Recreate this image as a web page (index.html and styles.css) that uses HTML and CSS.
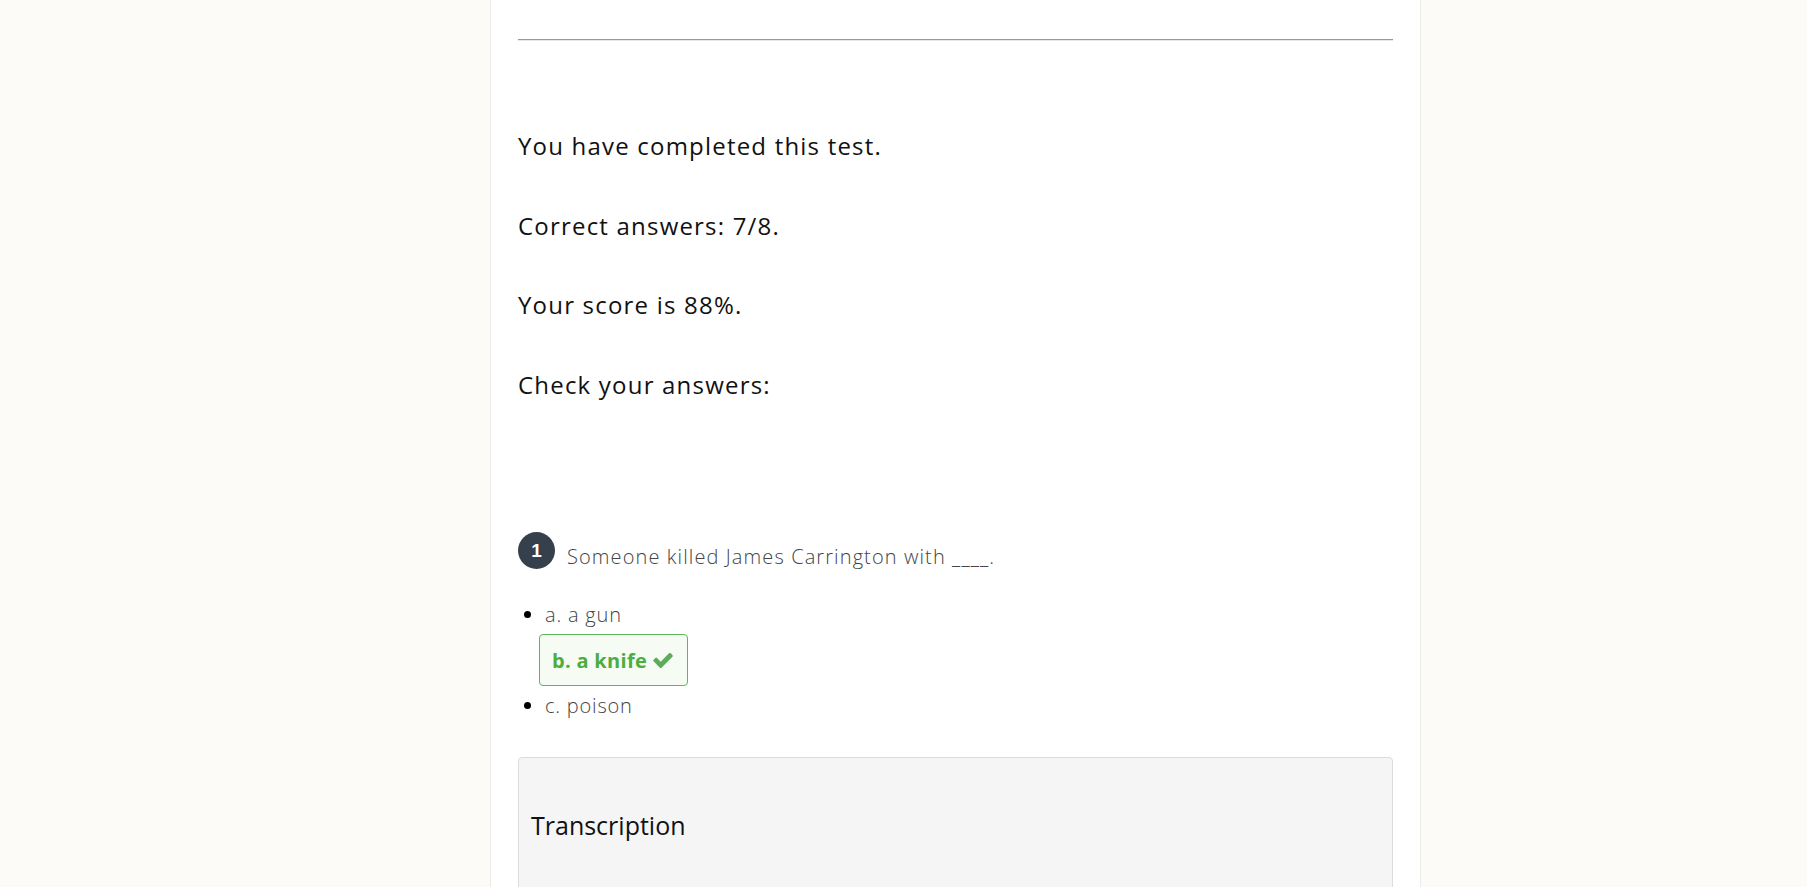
FILE: index.html
```html
<!DOCTYPE html>
<html lang="en">
<head>
<meta charset="utf-8">
<title>Test results</title>
<link rel="stylesheet" href="styles.css">
</head>
<body>
<main class="page">
  <hr class="rule">
  <section class="summary">
    <p class="line">You have completed this test.</p>
    <p class="line">Correct answers: 7/8.</p>
    <p class="line">Your score is 88%.</p>
    <p class="line">Check your answers:</p>
  </section>
  <section class="question">
    <div class="q-head">
      <span class="q-num">1</span>
      <span class="q-text">Someone killed James Carrington with ____.</span>
    </div>
    <ul class="answers">
      <li class="answer">a. a gun</li>
      <li class="answer correct"><span class="correct-box">b. a knife<svg class="check" viewBox="121 334 1550 1188" aria-hidden="true"><path d="M1671 566q0 40-28 68l-724 724-136 136q-28 28-68 28t-68-28l-136-136-362-362q-28-28-28-68t28-68l136-136q28-28 68-28t68 28l294 295 656-657q28-28 68-28t68 28l136 136q28 28 28 68z"/></svg></span></li>
      <li class="answer">c. poison</li>
    </ul>
    <div class="transcript">
      <h3 class="transcript-title">Transcription</h3>
    </div>
  </section>
</main>
</body>
</html>
```
FILE: styles.css
```css
html, body {
  margin: 0;
  padding: 0;
}
body {
  background: #fcfbf7;
  font-family: "Open Sans", "Liberation Sans", sans-serif;
  color: #111;
  overflow: hidden;
}
.page {
  box-sizing: border-box;
  margin-left: 490px;
  width: 931px;
  min-height: 100vh;
  background: #fff;
  border-left: 1px solid #eeebe6;
  border-right: 1px solid #eeebe6;
  padding: 39px 27px 0 27px;
}
.rule {
  margin: 0;
  height: 0;
  border: 0;
  border-top: 1px solid #999;
  border-bottom: 1px solid #e6e6e6;
}
.summary {
  padding-top: 88px;
}
.line {
  margin: 0 0 45.5px 0;
  font-size: 24px;
  line-height: 34px;
  letter-spacing: 1.2px;
  color: #111;
}
.line:last-child {
  margin-bottom: 0;
}
.question {
  padding-top: 130px;
}
.q-head {
  display: flex;
  align-items: flex-start;
}
.q-num {
  flex: none;
  width: 37px;
  height: 37px;
  border-radius: 50%;
  background: #36404c;
  color: #fff;
  font-weight: 700;
  font-size: 19px;
  line-height: 37px;
  text-align: center;
  font-family: "Liberation Sans", Arial, sans-serif;
}
.q-text {
  margin-left: 12px;
  padding-top: 11px;
  font-size: 20px;
  line-height: 27px;
  font-weight: 300;
  letter-spacing: 1.1px;
  color: #444;
}
.answers {
  margin: 31px 0 0 0;
  padding-left: 27px;
}
.answer {
  font-size: 20px;
  line-height: 27px;
  font-weight: 300;
  letter-spacing: 0.8px;
  color: #444;
}
.answer::marker {
  color: #000;
}
.answer.correct {
  list-style: none;
}
.correct-box {
  display: inline-flex;
  align-items: center;
  margin: 6px 0 6px -6px;
  padding: 12px 14px 11px 12px;
  border: 1px solid #5cb85c;
  border-radius: 4px;
  background: #f6fbf4;
  color: #4cae3c;
  font-weight: 700;
  letter-spacing: 0.3px;
}
.check {
  width: 20px;
  height: 15px;
  margin-left: 6px;
  fill: #5dab5d;
}
.transcript {
  margin-top: 38px;
  height: 400px;
  background: #f5f5f5;
  border: 1px solid #dcdcdc;
  border-radius: 4px;
  padding: 50px 13px 0 12px;
}
.transcript-title {
  margin: 0;
  font-size: 25px;
  line-height: 34px;
  font-weight: 400;
  color: #111;
}
```
